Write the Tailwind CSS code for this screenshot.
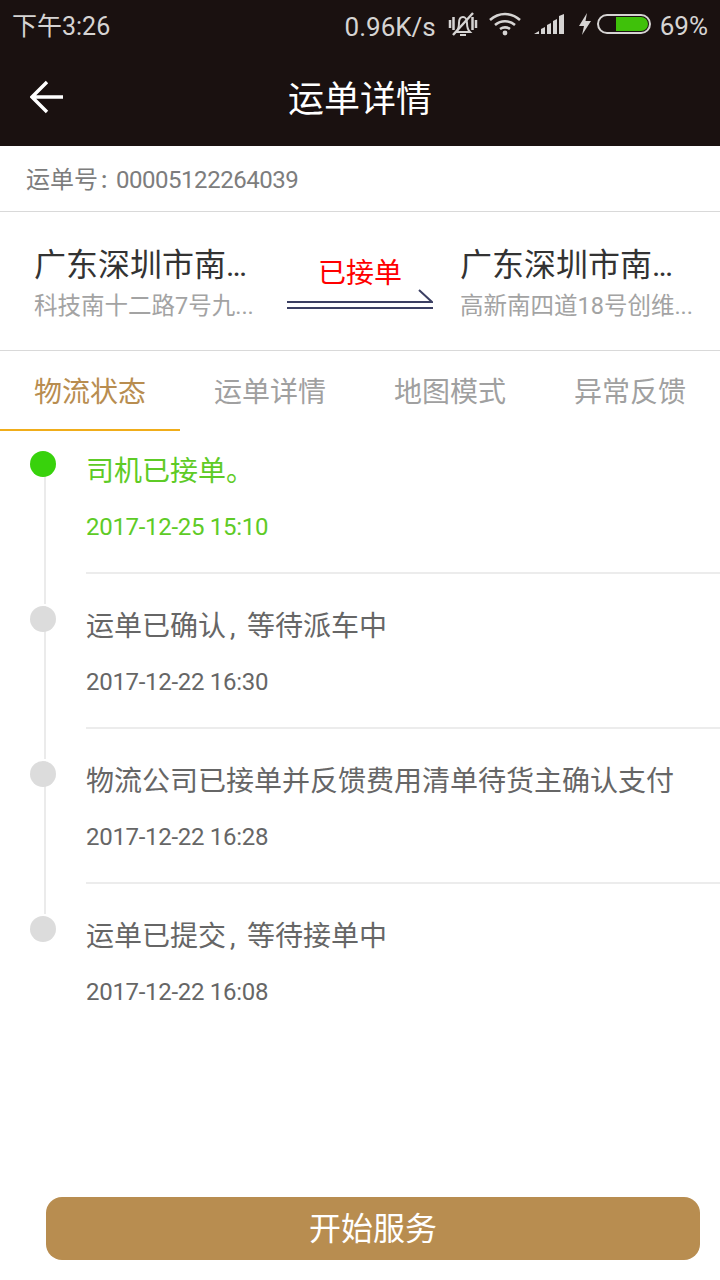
<!DOCTYPE html>
<html lang="zh-CN">
  <head>
    <meta charset="UTF-8" />
    <meta name="viewport" content="width=device-width, initial-scale=1.0" />
    <title>运单详情</title>
    <script src="https://cdn.jsdelivr.net/npm/@tailwindcss/browser@4"></script>
  </head>
  <body class="bg-white font-['Roboto','Noto_Sans_CJK_SC',sans-serif]">
    <div class="w-[720px] h-[1280px] flex flex-col overflow-hidden relative">
      <!-- status bar -->
      <div class="h-[50px] bg-[#1a1110] text-[#d6d4d3] flex items-center pl-[12px] pr-[12px] text-[26px] shrink-0">
        <span class="text-[25px] mt-[4px]">下午3:26</span>
        <div class="ml-auto flex items-center">
          <span class="mt-[4px]">0.96K/s</span>
          <div class="flex items-center -mt-[2px]">
            <svg class="ml-[12px]" width="30" height="26" viewBox="0 0 30 26" fill="none" stroke="#d6d4d3" stroke-width="2">
              <path d="M8 21c2-2 3-4 3-9 0-4 2-6 4-6s4 2 4 6c0 5 1 7 3 9z" />
              <path d="M12 24h6" />
              <path stroke-width="2.4" d="M25 2 5 24" />
              <path stroke-width="2.5" d="M2 9v8M5.500 6v13M24.500 6v13M28 9v8" />
            </svg>
            <svg class="ml-[11px]" width="32" height="24" viewBox="0 0 32 24" fill="none" stroke="#d6d4d3" stroke-width="2.6">
              <path d="M1 8c9-8 21-8 30 0M6 13c6-5 14-5 20 0M11 17c3-2 7-2 10 0" />
              <circle cx="16" cy="21" r="2.4" fill="#d6d4d3" stroke="none" />
            </svg>
            <svg class="ml-[13px]" width="31" height="22" viewBox="0 0 31 22" fill="#d6d4d3">
              <path d="M0 21l5-3v3zM7 21v-5l4-2v7zM13 21v-9l4-2v11zM19 21V8l4-2v15zM25 21V3l5-2v20z" />
            </svg>
            <svg class="ml-[14px]" width="12" height="22" viewBox="0 0 12 22" fill="#d6d4d3">
              <path d="M8 0 0 13h5l-2 9 9-14H6.500z" />
            </svg>
            <div class="ml-[6px] w-[54px] h-[20px] rounded-full border-2 border-[#d6d4d3] flex justify-end items-center pr-px">
              <div class="w-[32px] h-[14px] bg-[#3fc10a] rounded-r-full"></div>
            </div>
          </div>
          <span class="ml-[9px] mt-[2px] text-[26px]">69%</span>
        </div>
      </div>

      <!-- title bar -->
      <div class="h-[96px] bg-[#1a1110] flex items-center justify-center relative shrink-0">
        <svg class="absolute left-[30px] top-[30px]" width="34" height="34" viewBox="0 0 34 34" fill="none" stroke="#fff" stroke-width="3.4">
          <path d="M33 17H3M17 2 2 17l15 15" />
        </svg>
        <h1 class="text-white text-[36px] leading-none mt-[3px]">运单详情</h1>
      </div>

      <!-- order no -->
      <div class="h-[66px] border-b border-[#d9d9d9] flex items-center pl-[26px] pt-[3px] text-[#7d7d7d] text-[24px] shrink-0">
        <span>运单号</span><span class="w-[18px] pl-[3px] font-medium">:</span><span class="tracking-[-0.47px]">00005122264039</span>
      </div>

      <!-- route -->
      <div class="h-[139px] border-b border-[#d9d9d9] flex shrink-0">
        <div class="w-[287px] pl-[34px] pt-[32px]">
          <p class="text-[32px] leading-[42px] text-[#333] whitespace-nowrap">广东深圳市南<span class="tracking-[-2px]">...</span></p>
          <p class="text-[23.5px] leading-[34px] mt-[3px] text-[#a3a3a3] whitespace-nowrap">科技南十二路7号九...</p>
        </div>
        <div class="w-[146px] flex flex-col items-center pt-[44px]">
          <span class="text-[28px] leading-[36px] text-[#ff0000]">已接单</span>
          <svg class="-mt-[3px]" width="146" height="22" viewBox="0 0 146 22" fill="none" stroke="#3b3f63" stroke-width="2">
            <path d="M0 13h145L132 1M0 19h146" />
          </svg>
        </div>
        <div class="flex-1 pl-[27px] pt-[32px]">
          <p class="text-[32px] leading-[42px] text-[#333] whitespace-nowrap">广东深圳市南<span class="tracking-[-2px]">...</span></p>
          <p class="text-[23.5px] leading-[34px] mt-[3px] text-[#a3a3a3] whitespace-nowrap">高新南四道18号创维...</p>
        </div>
      </div>

      <!-- tabs -->
      <div class="h-[80px] grid grid-cols-4 text-[28px] text-[#a0a0a0] shrink-0">
        <div class="flex items-center justify-center pt-[5px] border-b-2 border-[#f0ad1a] text-[#b88d50]">物流状态</div>
        <div class="flex items-center justify-center pt-[3px]">运单详情</div>
        <div class="flex items-center justify-center pt-[3px]">地图模式</div>
        <div class="flex items-center justify-center pt-[3px]">异常反馈</div>
      </div>

      <!-- timeline -->
      <div class="flex flex-col">
        <div class="h-[155px] flex">
          <div class="w-[86px] relative shrink-0">
            <div class="absolute left-[44px] top-[20px] -bottom-[18px] w-[2px] bg-[#ebebeb]"></div>
            <div class="absolute left-[30px] top-[20px] w-[26px] h-[26px] rounded-full bg-[#38d20c]"></div>
          </div>
          <div class="flex-1 h-[143px] border-b-2 border-[#ececec] text-[#5ecb26]">
            <p class="text-[28px] leading-[40px] mt-[20px] pt-[1px]">司机已接单。</p>
            <p class="text-[24px] leading-[32px] mt-[19px] tracking-[-0.3px]">2017-12-25 15:10</p>
          </div>
        </div>
        <div class="h-[155px] flex">
          <div class="w-[86px] relative shrink-0">
            <div class="absolute left-[44px] top-[20px] -bottom-[18px] w-[2px] bg-[#ebebeb]"></div>
            <div class="absolute left-[30px] top-[20px] w-[26px] h-[26px] rounded-full bg-[#dcdcdc]"></div>
          </div>
          <div class="flex-1 h-[143px] border-b-2 border-[#ececec] text-[#666]">
            <p class="text-[28px] leading-[40px] mt-[20px] pt-[1px] flex">运单已确认<span class="w-[21px] pl-[4px]">,</span>等待派车中</p>
            <p class="text-[24px] leading-[32px] mt-[19px] tracking-[-0.3px]">2017-12-22 16:30</p>
          </div>
        </div>
        <div class="h-[155px] flex">
          <div class="w-[86px] relative shrink-0">
            <div class="absolute left-[44px] top-[20px] -bottom-[18px] w-[2px] bg-[#ebebeb]"></div>
            <div class="absolute left-[30px] top-[20px] w-[26px] h-[26px] rounded-full bg-[#dcdcdc]"></div>
          </div>
          <div class="flex-1 h-[143px] border-b-2 border-[#ececec] text-[#666]">
            <p class="text-[28px] leading-[40px] mt-[20px] pt-[1px]">物流公司已接单并反馈费用清单待货主确认支付</p>
            <p class="text-[24px] leading-[32px] mt-[19px] tracking-[-0.3px]">2017-12-22 16:28</p>
          </div>
        </div>
        <div class="h-[155px] flex">
          <div class="w-[86px] relative shrink-0">
            <div class="absolute left-[30px] top-[20px] w-[26px] h-[26px] rounded-full bg-[#dcdcdc]"></div>
          </div>
          <div class="flex-1 text-[#666]">
            <p class="text-[28px] leading-[40px] mt-[20px] pt-[1px] flex">运单已提交<span class="w-[21px] pl-[4px]">,</span>等待接单中</p>
            <p class="text-[24px] leading-[32px] mt-[19px] tracking-[-0.3px]">2017-12-22 16:08</p>
          </div>
        </div>
      </div>

      <!-- bottom button -->
      <div class="mt-auto pl-[46px] pr-[20px] pb-[20px]">
        <button class="w-full h-[63px] rounded-[16px] bg-[#b88d50] text-white text-[32px] pt-[1px]">开始服务</button>
      </div>
    </div>
  </body>
</html>
